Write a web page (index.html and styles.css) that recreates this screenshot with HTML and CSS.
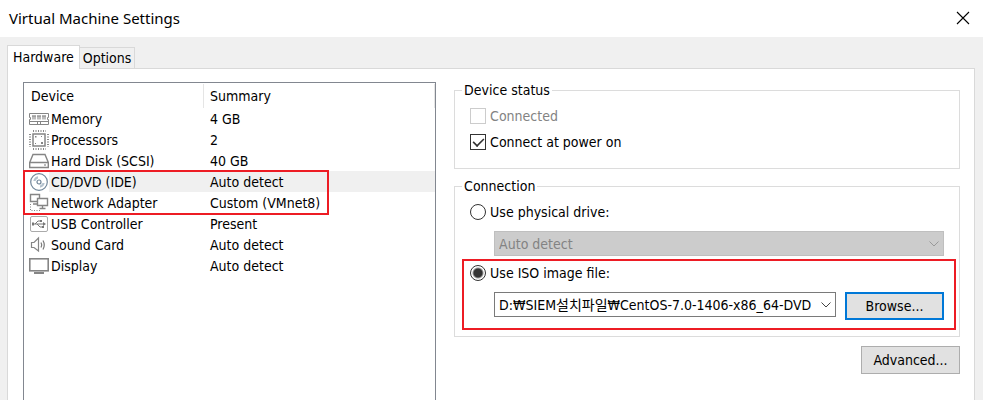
FILE: index.html
```html
<!DOCTYPE html>
<html lang="en">
<head>
<meta charset="utf-8">
<title>Virtual Machine Settings</title>
<link rel="stylesheet" href="styles.css">
</head>
<body>
<header class="titlebar">
  <h1 class="title">Virtual Machine Settings</h1>
  <button class="close" type="button" aria-label="Close">
    <svg width="12" height="12" viewBox="0 0 12 12"><path d="M0 0L12 12M12 0L0 12" stroke="#000" stroke-width="1.1"/></svg>
  </button>
</header>
<main class="window">
  <div class="tabs" role="tablist">
    <button class="tab tab-active" type="button" role="tab" aria-selected="true">Hardware</button>
    <button class="tab" type="button" role="tab" aria-selected="false">Options</button>
  </div>
  <div class="panel">
    <div class="devices">
      <table class="list">
        <colgroup><col class="icon-col"><col class="name-col"><col></colgroup>
        <thead>
          <tr><th colspan="2"><span>Device</span></th><th><span>Summary</span></th></tr>
        </thead>
        <tbody>
          <tr><td class="icon"><svg width="20" height="20" viewBox="0 0 20 20"><path d="M.5 4.500h19v4h-1v2h1v5H.5v-5h1v-2h-1z" fill="#fff" stroke="#858585"/><path d="M3 6.500h4v4H3zM8 6.500h4v4H8zM13 6.500h4v4h-4z" fill="#bbb"/><path d="M3 7h4M8 7h4M13 7h4" stroke="#888"/><path d="M1 12.500h18M8.500 12.500v3M11.500 12.500v3" stroke="#858585"/></svg></td><td>Memory</td><td>4 GB</td></tr>
          <tr><td class="icon"><svg width="20" height="20" viewBox="0 0 20 20"><rect x="4" y="4" width="12" height="12" fill="#fff" stroke="#858585" stroke-width="1.500"/><path d="M4 1h13M4 19h13M1 4v13M19 4v13" stroke="#888" stroke-width="2" stroke-dasharray="1 1.500"/><path d="M6 6h1.500v1.500H6zM12 12h2v2h-2zM12 6h1v1h-1zM6 13h1v1H6z" fill="#858585"/></svg></td><td>Processors</td><td>2</td></tr>
          <tr><td class="icon"><svg width="20" height="20" viewBox="0 0 20 20"><path d="M.7 11.500L4 3.500h12l3.300 8v5H.7zM.7 11.500h18.600" fill="#fff" stroke="#858585" stroke-width="1.400"/><path d="M15 14h2" stroke="#777" stroke-width="1.200"/></svg></td><td>Hard Disk (SCSI)</td><td>40 GB</td></tr>
          <tr class="selected"><td class="icon"><svg width="20" height="20" viewBox="0 0 20 20"><circle cx="10" cy="10" r="8.300" fill="#fff" stroke="#71869a" stroke-width="1.200"/><circle cx="10" cy="10" r="2" fill="#fff" stroke="#71869a" stroke-width="1.200"/><path d="M4.300 9A6 6 0 0 1 9 4.300V6.500A3.500 3.500 0 0 0 6.500 9zM15.700 11a6 6 0 0 1-4.700 4.700V13.500a3.500 3.500 0 0 0 2.500-2.500z" fill="#b4c2ce"/></svg></td><td>CD/DVD (IDE)</td><td>Auto detect</td></tr>
          <tr><td class="icon"><svg width="20" height="20" viewBox="0 0 20 20" fill="#fff" stroke="#858585"><path d="M1.500 1.500h9v7h-9zM4 11h5" stroke-width="1.400"/><path d="M8.500 5.500h10v7h-10zM13.500 12.500v2.500M10.500 15.500h6" stroke-width="1.400"/><path d="M1.500 11v6.500H11" fill="none" stroke-dasharray="1 1.500"/></svg></td><td>Network Adapter</td><td>Custom (VMnet8)</td></tr>
          <tr><td class="icon"><svg width="20" height="20" viewBox="0 0 20 20"><rect x="1.500" y="2.500" width="17" height="15" rx="1.500" fill="#fff" stroke="#aaa"/><path d="M4 10h11M6 10l3-3h2M8 10l3 3h2" fill="none" stroke="#777"/><path d="M3 8.500h2v3H3zM11 6h2v2h-2zM13 12h2v2h-2zM14 8l3 2-3 2z" fill="#777"/></svg></td><td>USB Controller</td><td>Present</td></tr>
          <tr><td class="icon"><svg width="20" height="20" viewBox="0 0 20 20" fill="none" stroke="#858585" stroke-width="1.200"><path d="M2.500 7.500H5L9.500 3v13L5 12.500H2.500z"/><path d="M12 7.500q1.500 2.500 0 5M14 5.500q2.500 4.500 0 9" stroke="#777"/></svg></td><td>Sound Card</td><td>Auto detect</td></tr>
          <tr><td class="icon"><svg width="20" height="20" viewBox="0 0 20 20"><rect x=".8" y="2.800" width="18.400" height="12" fill="#fff" stroke="#858585" stroke-width="1.600"/><path d="M5 17h10" stroke="#858585" stroke-width="2"/></svg></td><td>Display</td><td>Auto detect</td></tr>
        </tbody>
      </table>
      <div class="mark mark-devices"></div>
    </div>
    <div class="details">
      <fieldset class="group">
        <legend>Device status</legend>
        <label class="choice disabled"><input type="checkbox" disabled>Connected</label>
        <label class="choice"><input type="checkbox" checked>Connect at power on</label>
      </fieldset>
      <fieldset class="group">
        <legend>Connection</legend>
        <label class="choice"><input type="radio" name="source">Use physical drive:</label>
        <div class="source">
          <div class="combo disabled">
            <select aria-label="Physical drive" disabled><option>Auto detect</option></select>
            <svg class="arrow" width="10" height="6" viewBox="0 0 10 6"><path d="M.5.5L5 5 9.500.5"/></svg>
          </div>
        </div>
        <div class="iso">
          <label class="choice"><input type="radio" name="source" checked>Use ISO image file:</label>
          <div class="source">
            <div class="combo">
              <select aria-label="ISO image file"><option>D:₩SIEM설치파일₩CentOS-7.0-1406-x86_64-DVD</option></select>
              <svg class="arrow" width="10" height="6" viewBox="0 0 10 6"><path d="M.5.5L5 5 9.500.5"/></svg>
            </div>
            <button class="button button-focus" type="button">Browse...</button>
          </div>
          <div class="mark mark-iso"></div>
        </div>
      </fieldset>
      <button class="button" type="button">Advanced...</button>
    </div>
  </div>
</main>
</body>
</html>
```
FILE: styles.css
```css
* { box-sizing: border-box; }

body {
  margin: 0;
  height: 100vh;
  overflow: hidden;
  display: flex;
  flex-direction: column;
  background: #f0f0f0;
  color: #000;
  font: 14px/20px "DejaVu Sans Condensed", "Noto Sans CJK KR", sans-serif;
}

button, select, input { font: inherit; color: inherit; margin: 0; }

.titlebar {
  display: flex;
  justify-content: space-between;
  align-items: center;
  height: 37px;
  padding: 0 14px 2px 9px;
  background: #fff;
}
.title { margin: 0; font-family: "Noto Sans", sans-serif; font-size: 15px; font-weight: 400; }
.close { display: flex; padding: 0; border: 0; background: none; }
.close svg { overflow: visible; }

.window {
  flex: 1;
  display: flex;
  flex-direction: column;
  min-height: 0;
  padding: 8px 8px 0 7px;
}
.tabs { display: flex; align-items: flex-end; height: 23px; }
.tab {
  height: 21px;
  padding: 0 3px;
  border: 1px solid #d9d9d9;
  border-left: 0;
  border-bottom: 0;
  background: #f0f0f0;
}
.tab-active {
  position: relative;
  height: 24px;
  padding: 0 5px 2px;
  margin-bottom: -1px;
  border-left: 1px solid #d9d9d9;
  background: #fff;
}
.panel {
  flex: 1;
  display: flex;
  gap: 18px;
  min-height: 0;
  padding: 0 14px 0 15px;
  border: 1px solid #d9d9d9;
  border-bottom: 0;
  background: #fff;
}

.devices {
  position: relative;
  flex: 412 0 0;
  margin-top: 13px;
  border: 1px solid #828790;
  border-bottom: 0;
}
.list { width: 100%; border-collapse: collapse; table-layout: fixed; }
.list th { height: 25px; padding: 0; text-align: left; font-weight: 400; }
.list th span { display: block; padding: 2px 6px; border-right: 1px solid #e5e5e5; }
.list th:first-child span { padding-left: 7px; }
.icon-col { width: 25px; }
.name-col { width: 155px; }
.list td { height: 21px; padding: 0; line-height: 20px; white-space: nowrap; }
.list td:nth-child(2) { padding-left: 2px; }
.list td:last-child { padding-left: 6px; }
.list .icon { padding-left: 5px; }
.icon svg { display: block; }
.selected td:not(.icon) { background: #f0f0f0; }

.mark { position: absolute; border: 2px solid #ed1c24; pointer-events: none; }
.mark-devices { top: 87px; left: -1px; width: 306px; height: 45px; }
.mark-iso { inset: -4px -12px -10px -8px; }

.details {
  flex: 507 0 0;
  display: flex;
  flex-direction: column;
  align-items: flex-end;
  min-width: 0;
  padding-top: 11px;
}
.group {
  width: 100%;
  min-width: 0;
  margin: 0 0 7px;
  padding: 6px 15px 16px;
  border: 1px solid #dcdcdc;
}
.group legend { margin-left: -8px; padding: 0 2px; }
.choice { display: flex; align-items: center; gap: 4px; }
.choice + .choice { margin-top: 6px; }
.disabled { color: #838383; }
.choice input {
  appearance: none;
  width: 16px;
  height: 16px;
  border: 1px solid #333;
  background: #fff;
}
.choice input:disabled { border-color: #ccc; }
.choice input[type="radio"] { border-radius: 50%; }
.choice input[type="radio"]:checked { background: radial-gradient(circle, #333 4px, #fff 6px); }
.choice input[type="checkbox"]:checked { display: grid; place-items: center; }
.choice input[type="checkbox"]:checked::before {
  content: "";
  width: 11px;
  height: 6px;
  margin-bottom: 3px;
  border: solid #333;
  border-width: 0 0 2px 2px;
  transform: rotate(-45deg) scale(0.8);
}

.source { display: flex; gap: 9px; padding-left: 24px; margin-top: 9px; }
.iso { position: relative; margin-top: 7px; }
.combo { position: relative; flex: 1; min-width: 0; height: 25px; }
.combo select {
  appearance: none;
  display: block;
  width: 100%;
  height: 100%;
  padding: 0 23px 0 4px;
  border: 1px solid #7a7a7a;
  border-radius: 0;
  background: #fff;
}
.combo.disabled select { border-color: #bfbfbf; background: #ccc; opacity: 1; }
.arrow {
  position: absolute;
  top: 10px;
  right: 5px;
  fill: none;
  stroke: #444;
  pointer-events: none;
}
.disabled .arrow { stroke: #999; }
.button {
  width: 99px;
  height: 28px;
  padding: 0;
  border: 1px solid #adadad;
  background: #e1e1e1;
}
.button-focus { border: 2px solid #0078d7; }
.details > .button { margin-top: 2px; }
```
